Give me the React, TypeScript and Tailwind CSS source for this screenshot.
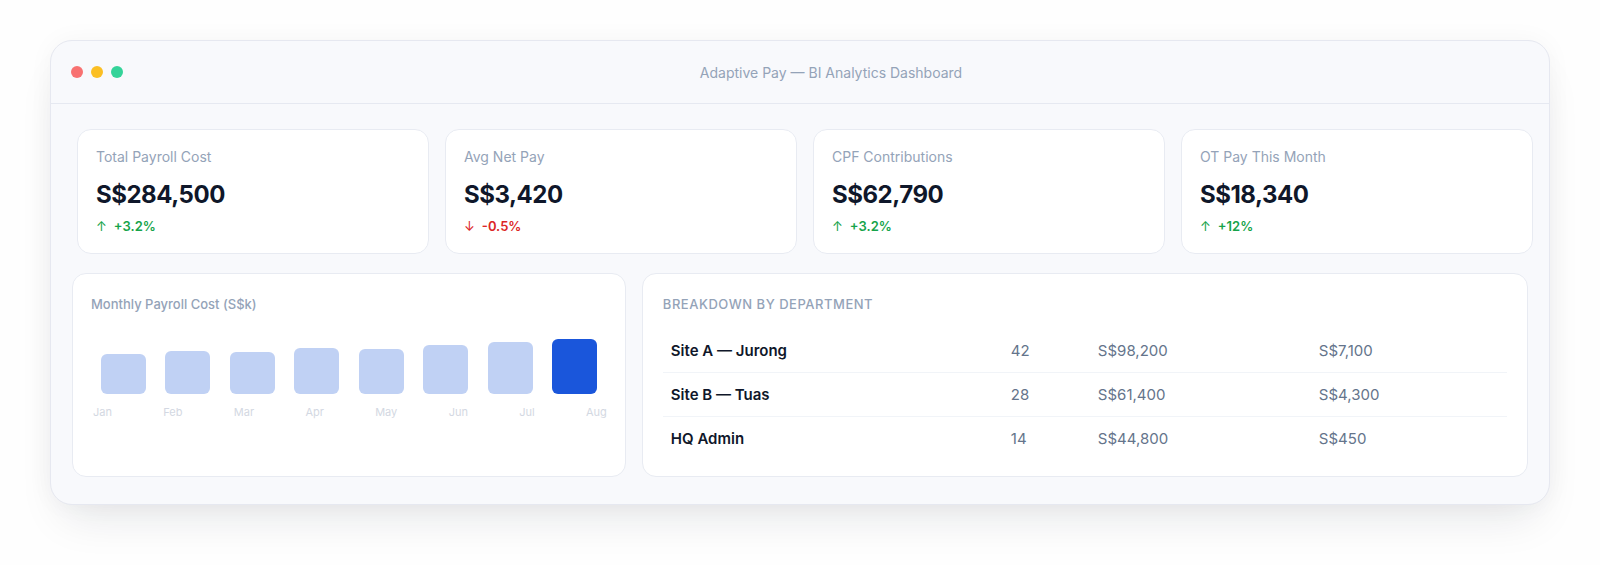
const stats = [
  { label: "Total Payroll Cost", value: "S$284,500", delta: "+3.2%", up: true },
  { label: "Avg Net Pay", value: "S$3,420", delta: "-0.5%", up: false },
  { label: "CPF Contributions", value: "S$62,790", delta: "+3.2%", up: true },
  { label: "OT Pay This Month", value: "S$18,340", delta: "+12%", up: true }
];

const months = [
  { m: "Jan", h: 40 },
  { m: "Feb", h: 43 },
  { m: "Mar", h: 42 },
  { m: "Apr", h: 46 },
  { m: "May", h: 45 },
  { m: "Jun", h: 49 },
  { m: "Jul", h: 52 },
  { m: "Aug", h: 55 }
];

const departments = [
  { name: "Site A — Jurong", count: "42", gross: "S$98,200", ot: "S$7,100" },
  { name: "Site B — Tuas", count: "28", gross: "S$61,400", ot: "S$4,300" },
  { name: "HQ Admin", count: "14", gross: "S$44,800", ot: "S$450" }
];

function StatCard({ label, value, delta, up }: (typeof stats)[number]) {
  return (
    <div className="rounded-[14px] border border-[#e8ebf2] bg-white px-[18px] pt-[17px] pb-[17px]">
      <p className="text-[14px] leading-5 text-[#94a3b8]">{label}</p>
      <p className="mt-[12px] text-[24px] font-bold leading-8 tracking-[-0.02em] text-[#0f172a]">
        {value}
      </p>
      <p
        className={`mt-[5px] flex items-center gap-[7px] text-[13px] font-semibold leading-5 ${
          up ? "text-[#16a34a]" : "text-[#dc2626]"
        }`}
      >
        <span className="font-normal">{up ? "↑" : "↓"}</span>
        <span>{delta}</span>
      </p>
    </div>
  );
}

export default function App() {
  return (
    <div
      className="min-h-screen bg-[#fefefe] px-[50px] pt-[40px]"
      style={{ fontFamily: "Inter, 'Noto Sans', sans-serif" }}
    >
      <div className="overflow-hidden rounded-[22px] border border-[#e6e8f0] bg-[#f8f9fc] shadow-[0_24px_46px_-14px_rgba(15,23,42,0.11),0_0_26px_rgba(15,23,42,0.04)]">
        <header className="flex h-[63px] items-center border-b border-[#e6e9f1] px-5">
          <div className="flex items-center gap-2">
            <span className="h-3 w-3 rounded-full bg-[#f87171]" />
            <span className="h-3 w-3 rounded-full bg-[#fbbf24]" />
            <span className="h-3 w-3 rounded-full bg-[#34d399]" />
          </div>
          <p className="flex-1 pl-[10px] text-center text-[14px] text-[#94a3b8]">
            Adaptive Pay — BI Analytics Dashboard
          </p>
        </header>

        <main className="px-4 pt-[25px] pb-[27px]">
          <section className="ml-[10px] grid grid-cols-4 gap-4">
            {stats.map((s) => (
              <StatCard key={s.label} {...s} />
            ))}
          </section>

          <section className="mx-[5px] mt-[19px] grid grid-cols-[5fr_8fr] gap-4">
            <div className="h-[204px] rounded-[14px] border border-[#e8ebf2] bg-white px-[18px] pt-5">
              <h2 className="text-[13px] font-medium leading-5 text-[#94a3b8]">
                Monthly Payroll Cost (S$k)
              </h2>
              <div className="mt-[16px] flex h-[64px] items-end">
                {months.map((b, i) => (
                  <div key={b.m} className="flex flex-1 justify-center">
                    <div
                      className={`w-[45px] rounded-[6px] ${
                        i === months.length - 1 ? "bg-[#1a56db]" : "bg-[#c0d1f4]"
                      }`}
                      style={{ height: b.h }}
                    />
                  </div>
                ))}
              </div>
              <div className="mt-[10px] flex justify-between pl-[2px] text-[11px] leading-4 text-[#d3d8e2]">
                {months.map((b) => (
                  <span key={b.m}>{b.m}</span>
                ))}
              </div>
            </div>

            <div className="h-[204px] rounded-[14px] border border-[#e8ebf2] bg-white px-5 pt-5">
              <h2 className="text-[13px] font-medium uppercase leading-5 tracking-[0.04em] text-[#94a3b8]">
                Breakdown by Department
              </h2>
              <div className="mt-[15px]">
                {departments.map((d, i) => (
                  <div
                    key={d.name}
                    className={`grid grid-cols-[340px_87px_221px_1fr] px-2 py-[11px] text-[15px] leading-[21px] ${
                      i < departments.length - 1 ? "border-b border-[#f1f4f8]" : ""
                    }`}
                  >
                    <span className="font-semibold text-[#0f172a]">{d.name}</span>
                    <span className="text-[#64748b]">{d.count}</span>
                    <span className="text-[#64748b]">{d.gross}</span>
                    <span className="text-[#64748b]">{d.ot}</span>
                  </div>
                ))}
              </div>
            </div>
          </section>
        </main>
      </div>
    </div>
  );
}
